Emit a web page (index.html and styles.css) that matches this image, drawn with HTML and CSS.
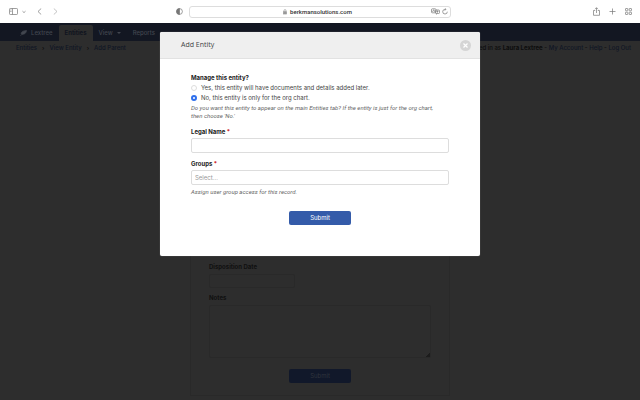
FILE: index.html
```html
<!DOCTYPE html>
<html lang="en">
<head>
    <meta charset="UTF-8">
    <meta name="viewport" content="width=device-width, initial-scale=1.0">
    <title>Add Entity</title>
    <link rel="stylesheet" href="styles.css">
</head>
<body>
    <!-- Browser toolbar -->
    <header class="toolbar">
        <div class="toolbar-left">
            <button class="icon-button" aria-label="Sidebar"><svg width="9" height="7" viewBox="0 0 9 7"><rect x=".5" y=".5" width="8" height="6" rx=".8"/><path d="M3.5 .5v6M1.3 2h1.2M1.3 3.5h1.2"/></svg></button>
            <button class="icon-button" aria-label="Tab groups"><svg width="4" height="4" viewBox="0 0 4 4"><path d="M.5 1.2L2 2.6 3.5 1.2"/></svg></button>
            <button class="icon-button back" aria-label="Back"><svg width="5" height="7" viewBox="0 0 5 7"><path d="M4.2 .5L1 3.5l3.2 3"/></svg></button>
            <button class="icon-button light" aria-label="Forward"><svg width="5" height="7" viewBox="0 0 5 7"><path d="M.8 .5L4 3.5l-3.2 3"/></svg></button>
            <button class="icon-button shield" aria-label="Privacy report"><svg width="7" height="7" viewBox="0 0 7 7"><circle cx="3.5" cy="3.5" r="2.9"/><path class="solid" d="M3.5 .6v5.8a2.900 2.900 0 0 1 0-5.800z"/></svg></button>
        </div>
        <div class="address">
            <span class="address-text">
                <svg width="4" height="6" viewBox="0 0 4 6"><rect class="solid" x=".5" y="2.7" width="3" height="2.3"/><path d="M1 2.7V1.6a1 1 0 0 1 2 0v1.1"/></svg>
                berkmansolutions.com
            </span>
            <button class="icon-button" aria-label="Translate"><svg width="9" height="7" viewBox="0 0 9 7"><rect x=".5" y=".8" width="4.5" height="4" rx=".8"/><path d="M1.5 4L2.7 1.7 4 4"/><rect x="4.5" y="2" width="4" height="3.5" rx=".8"/><path d="M5.5 3.3h2M6.5 2.7v2M5.5 5.5v1"/></svg></button>
            <button class="icon-button" aria-label="Reload"><svg width="6" height="7" viewBox="0 0 6 7"><path d="M5.3 3.7A2.3 2.3 0 1 1 3 1.4h.8M2.8 .3L4 1.4 2.8 2.6"/></svg></button>
        </div>
        <div class="toolbar-right">
            <button class="icon-button" aria-label="Share"><svg width="7" height="9" viewBox="0 0 7 9"><path d="M2.2 3.5H.5v4.8h6V3.5H4.8M3.5 6V.8M2 2.2L3.5 .7 5 2.2"/></svg></button>
            <button class="icon-button" aria-label="New tab"><svg width="7" height="7" viewBox="0 0 7 7"><path d="M3.5 .5v6M.5 3.5h6"/></svg></button>
            <button class="icon-button" aria-label="Tab overview"><svg width="7" height="7" viewBox="0 0 7 7"><rect x=".5" y=".5" width="2.3" height="2.3" rx=".4"/><rect x="4.2" y=".5" width="2.3" height="2.3" rx=".4"/><rect x=".5" y="4.2" width="2.3" height="2.3" rx=".4"/><rect x="4.2" y="4.2" width="2.3" height="2.3" rx=".4"/></svg></button>
        </div>
    </header>

    <!-- Page behind the dialog -->
    <div class="page">
        <nav class="navbar">
            <a class="brand" href="#"><svg width="7" height="6" viewBox="0 0 7 6"><path class="solid" d="M1.2 4Q.8 1 6.5 .5 6 4.5 2 4.3"/><path d="M.4 5.6L3 3.5"/></svg>Lextree</a>
            <a class="active" href="#">Entities</a>
            <a href="#">View <span class="caret"></span></a>
            <a href="#">Reports</a>
        </nav>
        <div class="subnav">
            <div class="breadcrumbs">
                <a href="#">Entities</a><span>›</span><a href="#">View Entity</a><span>›</span><a href="#">Add Parent</a>
            </div>
            <div class="account">Logged in as <b>Laura Lextree</b> - <a href="#">My Account</a> - <a href="#">Help</a> - <a href="#">Log Out</a></div>
        </div>
        <form class="card">
            <label for="disposition_date">Disposition Date</label>
            <input class="date" type="text" id="disposition_date">
            <label for="notes">Notes</label>
            <textarea id="notes"></textarea>
            <button class="submit" type="submit">Submit</button>
        </form>
    </div>

    <div class="modal" role="dialog" aria-labelledby="modal_title">
        <div class="modal-header">
            <h1 id="modal_title">Add Entity</h1>
            <button class="close" aria-label="Close"><svg width="5" height="5" viewBox="0 0 5 5"><path d="M.5 .5l4 4M4.5 .5l-4 4"/></svg></button>
        </div>
        <form class="modal-body">
            <fieldset>
                <legend>Manage this entity?</legend>
                <label class="option"><input type="radio" name="manage" value="yes">Yes, this entity will have documents and details added later.</label>
                <label class="option"><input type="radio" name="manage" value="no" checked>No, this entity is only for the org chart.</label>
                <p class="hint">Do you want this entity to appear on the main Entities tab? If the entity is just for the org chart, then choose 'No.'</p>
            </fieldset>
            <label for="legal_name">Legal Name <span class="required">*</span></label>
            <input type="text" id="legal_name">
            <label for="groups">Groups <span class="required">*</span></label>
            <input type="text" id="groups" placeholder="Select...">
            <p class="hint">Assign user group access for this record.</p>
            <button class="submit" type="submit">Submit</button>
        </form>
    </div>
</body>
</html>
```

FILE: styles.css
```css
* {
    box-sizing: border-box;
}
body {
    background-color: #2d2d2d;
    font-family: Inter, "Liberation Sans", sans-serif;
    font-size: 6px;
    line-height: 8px;
    margin: 0;
    height: 100vh;
    display: flex;
    flex-direction: column;
    overflow: hidden;
    position: relative;
}
button, input, textarea {
    font: inherit;
}
a {
    color: inherit;
    text-decoration: none;
}
svg {
    display: block;
    fill: none;
    stroke: currentColor;
    stroke-width: 0.7;
}
.solid {
    fill: currentColor;
}

/* Browser toolbar */
.toolbar {
    background-color: #ffffff;
    color: #666666;
    height: 23px;
    flex: none;
    display: grid;
    grid-template-columns: 1fr 41% 1fr;
    align-items: center;
}
.toolbar-left, .toolbar-right {
    display: flex;
    align-items: center;
    gap: 9px;
}
.toolbar-left {
    gap: 4px;
    padding-left: 9px;
}
.toolbar-left .back {
    margin: 0 7px;
}
.toolbar-right {
    justify-content: flex-end;
    padding-right: 8px;
}
.icon-button {
    background: none;
    border: none;
    padding: 0;
    color: #777777;
}
.icon-button.light {
    color: #aaaaaa;
}
.shield {
    margin-left: auto;
    margin-right: 6px;
}
.address {
    border: 1px solid #dddddd;
    border-radius: 3px;
    height: 12px;
    display: flex;
    align-items: center;
    gap: 2px;
    padding-left: 16px;
    padding-right: 2px;
}
.address-text {
    flex: 1;
    display: flex;
    align-items: center;
    justify-content: center;
    gap: 3px;
    color: #333333;
    font-family: Roboto, sans-serif;
    font-weight: 500;
}
.address-text svg {
    color: #999999;
}

/* Dimmed page */
.page {
    flex: 1;
    display: flex;
    flex-direction: column;
}
.navbar {
    background-color: #131722;
    color: #42464f;
    height: 18px;
    padding-left: 12px;
    display: flex;
    align-items: flex-end;
}
.navbar a {
    height: 16px;
    padding: 4px 6px;
    display: flex;
    align-items: center;
    gap: 4px;
    font-weight: 500;
}
.navbar .brand {
    padding-left: 8px;
}
.navbar .active {
    background-color: #2d2d2d;
    color: #10141f;
    font-weight: 700;
    border-radius: 2px 2px 0 0;
}
.caret {
    border: 2px solid transparent;
    border-top-color: currentColor;
    border-bottom: none;
}
.subnav {
    display: flex;
    justify-content: space-between;
    padding: 3px 9px 3px 16px;
    color: #0c0c0c;
    font-weight: 500;
}
.subnav a {
    color: #0f1524;
}
.breadcrumbs {
    display: flex;
    gap: 5px;
}
.card {
    flex: 1;
    width: 260px;
    margin: 0 auto 4px;
    padding: 0 18px 12px;
    border: 1px solid #292929;
    display: flex;
    flex-direction: column;
    justify-content: flex-end;
    color: #101010;
}
.card label {
    font-weight: 700;
    margin-bottom: 3px;
}
.card input, .card textarea {
    background: none;
    border: 1px solid #292929;
    border-radius: 2px;
}
.card .date {
    width: 86px;
    height: 14px;
    margin-bottom: 6px;
}
.card textarea {
    height: 53px;
    margin-bottom: 11px;
}
.card textarea::-webkit-resizer {
    background: linear-gradient(135deg, transparent 85%, #1c1c1c 85%);
}
.card .submit {
    background-color: #11182a;
    color: #30343d;
}

.submit {
    background-color: #345ba9;
    color: #ffffff;
    border: none;
    border-radius: 2px;
    width: 62px;
    height: 14px;
    padding: 0;
    align-self: center;
    flex: none;
}

/* Dialog */
.modal {
    position: absolute;
    top: 32px;
    left: 25%;
    right: 25%;
    background-color: #ffffff;
    border-radius: 2px;
    box-shadow: 0 0 1px #999999;
    color: #444444;
}
.modal-header {
    background-color: #efefef;
    border-bottom: 1px solid #e2e2e2;
    border-radius: 2px 2px 0 0;
    height: 27px;
    padding: 0 9px 0 21px;
    display: flex;
    align-items: center;
    justify-content: space-between;
}
h1 {
    font-family: "Open Sans", sans-serif;
    font-size: 7px;
    font-weight: 400;
    margin: 0;
}
.close {
    background-color: #d5d5d5;
    color: #ffffff;
    border: none;
    border-radius: 50%;
    width: 11px;
    height: 11px;
    padding: 3px;
}
.close svg {
    stroke-width: 1.2;
}
.modal-body {
    display: flex;
    flex-direction: column;
    padding: 15px 31px 31px;
}
fieldset {
    border: none;
    margin: 0 0 8px;
    padding: 0;
    min-width: 0;
}
legend, .modal-body > label {
    color: #222222;
    font-weight: 700;
    padding: 0;
    margin-bottom: 2px;
}
.option {
    display: flex;
    align-items: center;
    gap: 4px;
    margin-bottom: 2px;
}
.option input {
    appearance: none;
    width: 6px;
    height: 6px;
    margin: 0;
    border: 1px solid #dddddd;
    border-radius: 50%;
}
.option input:checked {
    border: 2px solid #2f6fec;
}
.hint {
    color: #666666;
    font-family: Roboto, sans-serif;
    font-style: italic;
    margin: 0;
    padding-right: 8px;
}
.required {
    color: #cc2222;
}
.modal-body > input {
    border: 1px solid #dddddd;
    border-radius: 2px;
    height: 15px;
    padding: 0 3px;
    margin-bottom: 7px;
}
.modal-body > input::placeholder {
    color: #999999;
}
.modal-body > .submit {
    margin-top: 15px;
}
.modal-body > #groups {
    margin-bottom: 3px;
}
```
